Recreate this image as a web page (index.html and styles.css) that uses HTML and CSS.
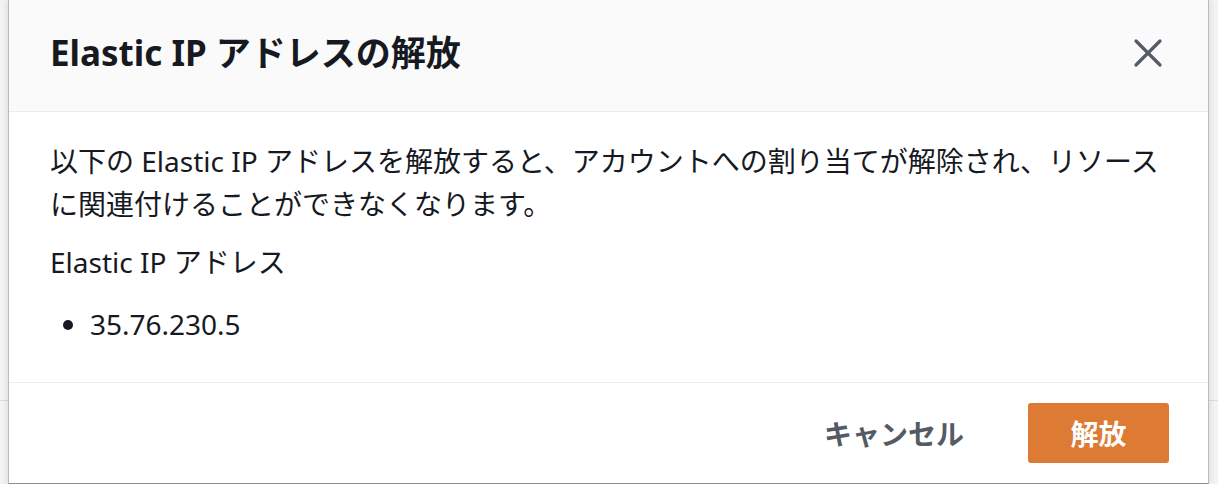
FILE: index.html
```html
<!DOCTYPE html>
<html lang="ja">
<head>
<meta charset="utf-8">
<title>Elastic IP アドレスの解放</title>
<link rel="stylesheet" href="styles.css">
</head>
<body>
<div class="modal">
  <div class="modal-header">
    <h2 class="modal-title">Elastic IP アドレスの解放</h2>
    <button class="close-btn" aria-label="閉じる">
      <svg width="30" height="30" viewBox="0 0 30 30"><path d="M3 3 L27 27 M27 3 L3 27" stroke="#545b64" stroke-width="3.2" stroke-linecap="round" fill="none"/></svg>
    </button>
  </div>
  <div class="modal-body">
    <p class="desc">以下の Elastic IP アドレスを解放すると、アカウントへの割り当てが解除され、リソースに関連付けることができなくなります。</p>
    <div class="label">Elastic IP アドレス</div>
    <ul class="ip-list">
      <li>35.76.230.5</li>
    </ul>
  </div>
  <div class="modal-footer">
    <button class="btn btn-link">キャンセル</button>
    <button class="btn btn-primary">解放</button>
  </div>
</div>
</body>
</html>
```
FILE: styles.css
```css
html, body {
  margin: 0;
  padding: 0;
}
body {
  width: 1218px;
  height: 484px;
  overflow: hidden;
  background-color: #f2f3f3;
  background-image: linear-gradient(to bottom, transparent 400px, #dcdcdc 400px, #dcdcdc 401px, transparent 401px);
  padding-left: 8px;
  box-sizing: border-box;
  font-family: "Noto Sans", "Noto Sans CJK JP", sans-serif;
  color: #16191f;
}
.modal {
  width: 1201px;
  height: 484px;
  box-sizing: border-box;
  background: #fff;
  border-left: 1px solid #b9bcbe;
  border-right: 1px solid #b9bcbe;
  border-bottom: 1px solid #8d9096;
  box-shadow: -3px 0 4px rgba(0,0,0,0.06), 3px 0 4px rgba(0,0,0,0.06);
  display: flex;
  flex-direction: column;
}
.modal-header {
  height: 111px;
  background: #fafafa;
  border-bottom: 1px solid #eaeded;
  display: flex;
  align-items: center;
  justify-content: space-between;
  padding: 0 45px 0 41px;
  flex-shrink: 0;
}
.modal-title {
  margin: 0;
  font-size: 35px;
  font-weight: 700;
  line-height: 44px;
  position: relative;
  top: -3px;
}
.close-btn {
  border: 0;
  background: none;
  padding: 0;
  width: 30px;
  height: 30px;
  display: flex;
  cursor: pointer;
  position: relative;
  top: -3px;
}
.modal-body {
  flex: 1;
  padding: 28px 41px 0 41px;
}
.desc {
  margin: 0;
  font-size: 28px;
  line-height: 43px;
}
.label {
  margin-top: 18px;
  font-size: 28px;
  line-height: 36px;
}
.ip-list {
  margin: 26px 0 0 0;
  padding-left: 40px;
  font-size: 28px;
  line-height: 36px;
}
.modal-footer {
  height: 99px;
  flex-shrink: 0;
  border-top: 1px solid #eaeded;
  display: flex;
  align-items: center;
  justify-content: flex-end;
  padding: 0 39px 1px 0;
  gap: 44px;
}
.btn {
  font-family: "Noto Sans", "Noto Sans CJK JP", sans-serif;
  font-size: 28px;
  font-weight: 700;
  border: 0;
  cursor: pointer;
}
.btn-link {
  background: none;
  color: #545b64;
  padding: 0 20px;
  height: 60px;
}
.btn-primary {
  background: #dd7b35;
  color: #fff;
  width: 141px;
  height: 60px;
  border-radius: 3px;
}
```
